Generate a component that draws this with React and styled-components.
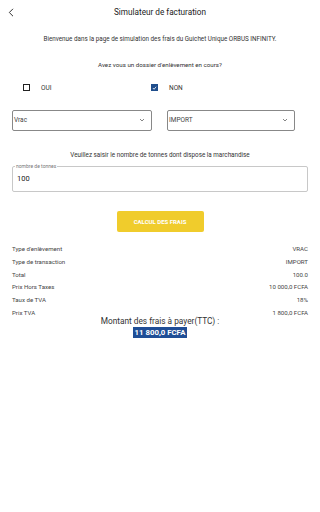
import React from "react";
import styled, { createGlobalStyle } from "styled-components";

const Global = createGlobalStyle`
  html, body { margin: 0; padding: 0; background: #fff; }
  body { font-family: Roboto, "Liberation Sans", sans-serif; color: #333; width: 320px; }
  * { box-sizing: border-box; }
`;

const Page = styled.div`
  width: 320px;
  height: 512px;
  display: flex;
  flex-direction: column;
  background: #fff;
`;

const Header = styled.div`
  height: 24px;
  display: flex;
  align-items: center;
  position: relative;
  justify-content: center;
`;

const Back = styled.div`
  position: absolute;
  left: 8px;
  top: 6px;
  width: 10px;
  height: 12px;
  display: flex;
  align-items: center;
`;

const Title = styled.div`
  font-size: 8.2px;
  color: #222;
`;

const Body = styled.div`
  padding: 0 12px;
  display: flex;
  flex-direction: column;
`;

const Centered = styled.div`
  text-align: center;
  font-size: ${(p) => p.$size || 6}px;
  color: ${(p) => p.$color || "#333"};
  margin-top: ${(p) => p.$mt || 0}px;
  line-height: ${(p) => p.$lh || 1.2};
`;

const CheckRow = styled.div`
  display: grid;
  grid-template-columns: 128px 1fr;
  margin-top: 15px;
  padding-left: 11px;
`;

const CheckItem = styled.div`
  display: flex;
  align-items: center;
  gap: 11px;
  font-size: 6.5px;
  color: #333;
`;

const Box = styled.div`
  width: 7px;
  height: 7px;
  border: 1px solid #222;
  display: flex;
  align-items: center;
  justify-content: center;
  background: ${(p) => (p.$checked ? "#1f4e8c" : "#fff")};
  border-color: ${(p) => (p.$checked ? "#1f4e8c" : "#222")};
`;

const SelectRow = styled.div`
  display: flex;
  gap: 15px;
  margin-top: 18px;
`;

const Select = styled.div`
  width: ${(p) => p.$w}px;
  height: 21px;
  border: 1px solid #888;
  border-radius: 2px;
  display: flex;
  align-items: center;
  justify-content: space-between;
  padding: 0 6px 0 1px;
  font-size: 6.5px;
  color: #444;
`;

const Field = styled.div`
  position: relative;
  margin-top: 6px;
  height: 26px;
  border: 1px solid #c8c8c8;
  border-radius: 2px;
  display: flex;
  align-items: center;
  padding-left: 4px;
  font-size: 7.5px;
  color: #222;
`;

const FieldLabel = styled.span`
  position: absolute;
  top: -3px;
  left: 2px;
  padding: 0 1px;
  background: #fff;
  font-size: 5px;
  color: #777;
  line-height: 5px;
`;

const Button = styled.div`
  align-self: center;
  margin-top: 19px;
  width: 87px;
  height: 21px;
  background: #f0cc2c;
  border-radius: 2px;
  color: #fff;
  font-size: 6px;
  font-weight: 700;
  display: flex;
  align-items: center;
  justify-content: center;
`;

const Results = styled.div`
  margin-top: 11px;
  display: flex;
  flex-direction: column;
`;

const ResultRow = styled.div`
  display: flex;
  justify-content: space-between;
  height: 12.7px;
  align-items: center;
  font-size: 6.1px;
  color: #444;
`;

const Total = styled.div`
  display: flex;
  flex-direction: column;
  align-items: center;
  margin-top: -3px;
`;

const TotalLabel = styled.div`
  font-size: 8.3px;
  color: #333;
  line-height: 11px;
`;

const TotalValue = styled.div`
  background: #1f4e96;
  color: #fff;
  font-weight: 700;
  font-size: 7.8px;
  padding: 1px 2px;
  line-height: 9px;
`;

const Chevron = () => (
  <svg width="6" height="4" viewBox="0 0 6 4">
    <path d="M1 1 L3 3 L5 1" fill="none" stroke="#666" strokeWidth="0.8" />
  </svg>
);

const rows = [
  ["Type d'enlèvement", "VRAC"],
  ["Type de transaction", "IMPORT"],
  ["Total", "100.0"],
  ["Prix Hors Taxes", "10 000,0 FCFA"],
  ["Taux de TVA", "18%"],
  ["Prix TVA", "1 800,0 FCFA"],
];

export default function App() {
  return (
    <Page>
      <Global />
      <Header>
        <Back>
          <svg width="6" height="9" viewBox="0 0 6 9">
            <path d="M5 0.8 L1.3 4.5 L5 8.2" fill="none" stroke="#333" strokeWidth="1" />
          </svg>
        </Back>
        <Title>Simulateur de facturation</Title>
      </Header>
      <Body>
        <Centered $mt={12} $size={6.3}>
          Bienvenue dans la page de simulation des frais du Guichet Unique ORBUS INFINITY.
        </Centered>
        <Centered $mt={18} $size={6.2}>
          Avez vous un dossier d'enlèvement en cours?
        </Centered>
        <CheckRow>
          <CheckItem>
            <Box />
            OUI
          </CheckItem>
          <CheckItem>
            <Box $checked>
              <svg width="6" height="6" viewBox="0 0 6 6">
                <path d="M1 3 L2.5 4.5 L5 1.5" fill="none" stroke="#fff" strokeWidth="1" />
              </svg>
            </Box>
            NON
          </CheckItem>
        </CheckRow>
        <SelectRow>
          <Select $w={140}>
            Vrac
            <Chevron />
          </Select>
          <Select $w={128}>
            IMPORT
            <Chevron />
          </Select>
        </SelectRow>
        <Centered $mt={21} $size={6.3} $color="#333">
          Veuillez saisir le nombre de tonnes dont dispose la marchandise
        </Centered>
        <Field>
          <FieldLabel>nombre de tonnes</FieldLabel>
          100
        </Field>
        <Button>CALCUL DES FRAIS</Button>
        <Results>
          {rows.map(([k, v]) => (
            <ResultRow key={k}>
              <span>{k}</span>
              <span>{v}</span>
            </ResultRow>
          ))}
        </Results>
        <Total>
          <TotalLabel>Montant des frais à payer(TTC) :</TotalLabel>
          <TotalValue>11 800,0 FCFA</TotalValue>
        </Total>
      </Body>
    </Page>
  );
}
